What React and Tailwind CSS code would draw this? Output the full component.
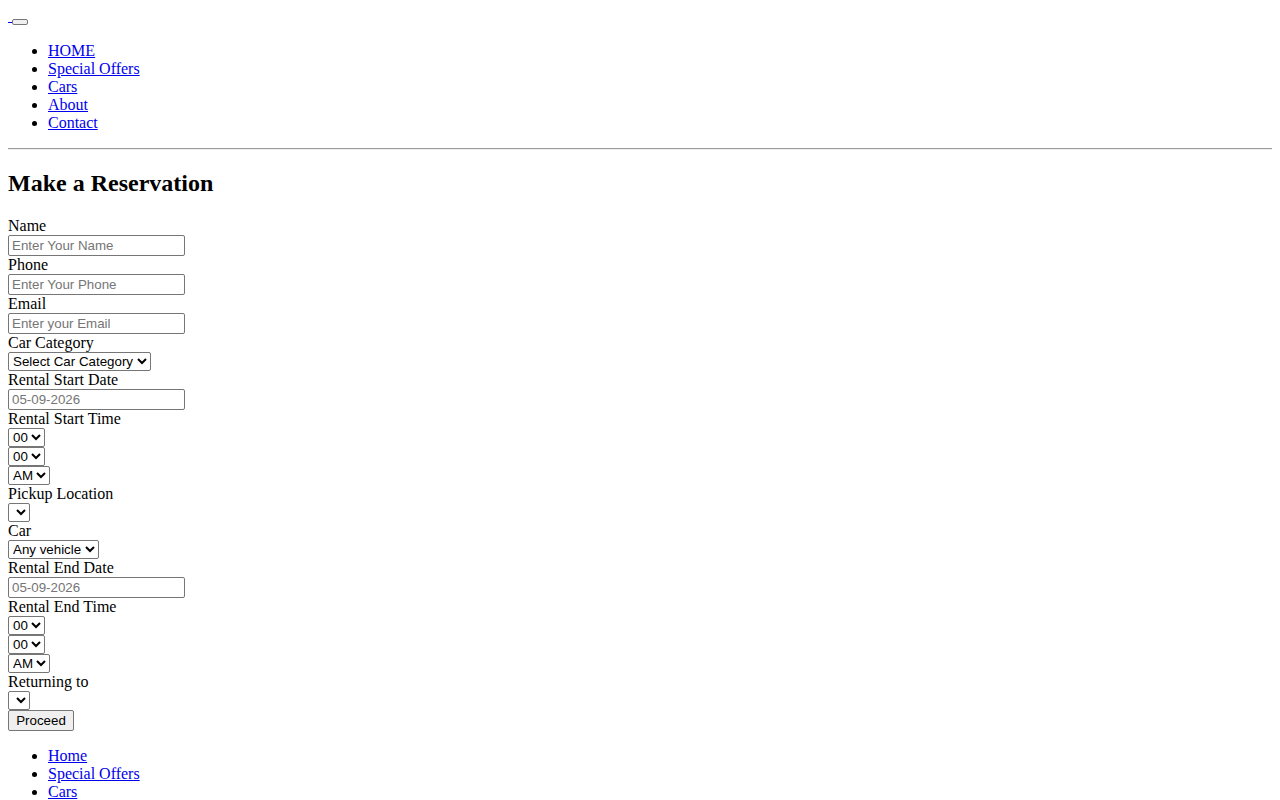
import React from "react";

const navLinks = ["HOME", "Special Offers", "Cars", "About", "Contact"];
const footerLinks = ["Home", "Special Offers", "Cars", "About", "Contact"];

const inputCls =
  "block w-[177px] h-[21px] border border-[#767676] rounded-[2px] pl-[3px] pr-[2px] bg-white text-[13.33px] leading-[15px] font-['Liberation_Sans',Arial,sans-serif] text-black placeholder:text-[#757575] outline-none";

const selectCls =
  "block h-[19px] border border-[#767676] rounded-[2px] bg-white text-[13.33px] leading-[15px] font-['Liberation_Sans',Arial,sans-serif] text-black outline-none";

function LinkList({ items }) {
  return (
    <ul className="my-4 pl-10 list-disc">
      {items.map((l) => (
        <li key={l} className="leading-[18px]">
          <a href="#" className="text-[#0000ee] underline">
            {l}
          </a>
        </li>
      ))}
    </ul>
  );
}

function Field({ label, children }) {
  return (
    <>
      <label className="block leading-[18px]">{label}</label>
      {children}
    </>
  );
}

function TimeSelects() {
  const hours = Array.from({ length: 13 }, (_, i) => String(i).padStart(2, "0"));
  const mins = ["00", "15", "30", "45"];
  return (
    <>
      <select className={selectCls}>
        {hours.map((h) => (
          <option key={h}>{h}</option>
        ))}
      </select>
      <select className={selectCls}>
        {mins.map((m) => (
          <option key={m}>{m}</option>
        ))}
      </select>
      <select className={selectCls}>
        <option>AM</option>
        <option>PM</option>
      </select>
    </>
  );
}

export default function App() {
  return (
    <div className="bg-white min-h-screen p-2 text-black text-base leading-[18px] font-['Liberation_Serif','Times_New_Roman',serif]">
      <div className="flex items-start h-[18px]">
        <a href="#" className="block w-[4px] h-px mt-[14px] bg-[#0000ee]" />
        <button className="block w-[16px] h-[6px] mt-[11px] bg-[#efefef] border border-[#767676] rounded-[2px]" />
      </div>

      <LinkList items={navLinks} />

      <hr className="my-2 h-0 border-t border-b border-t-[#9a9a9a] border-b-[#eeeeee]" />

      <h2 className="mt-[20px] mb-[20px] text-2xl font-bold leading-[27px]">
        Make a Reservation
      </h2>

      <form onSubmit={(e) => e.preventDefault()}>
        <Field label="Name">
          <input className={inputCls} placeholder="Enter Your Name" />
        </Field>
        <Field label="Phone">
          <input className={inputCls} placeholder="Enter Your Phone" />
        </Field>
        <Field label="Email">
          <input className={inputCls} placeholder="Enter your Email" />
        </Field>
        <Field label="Car Category">
          <select className={selectCls}>
            <option>Select Car Category</option>
            <option>Economy</option>
            <option>Compact</option>
            <option>SUV</option>
          </select>
        </Field>
        <Field label="Rental Start Date">
          <input className={inputCls} placeholder="05-09-2026" />
        </Field>
        <Field label="Rental Start Time">
          <TimeSelects />
        </Field>
        <Field label="Pickup Location">
          <select className={selectCls}>
            <option></option>
          </select>
        </Field>
        <Field label="Car">
          <select className={selectCls}>
            <option>Any vehicle</option>
          </select>
        </Field>
        <Field label="Rental End Date">
          <input className={inputCls} placeholder="05-09-2026" />
        </Field>
        <Field label="Rental End Time">
          <TimeSelects />
        </Field>
        <Field label="Returning to">
          <select className={selectCls}>
            <option></option>
          </select>
        </Field>
        <button
          type="submit"
          className="block w-[66px] h-[21px] bg-[#efefef] border border-[#767676] rounded-[2px] text-[13.33px] leading-[15px] font-['Liberation_Sans',Arial,sans-serif] text-black"
        >
          Proceed
        </button>
      </form>

      <LinkList items={footerLinks} />
    </div>
  );
}
